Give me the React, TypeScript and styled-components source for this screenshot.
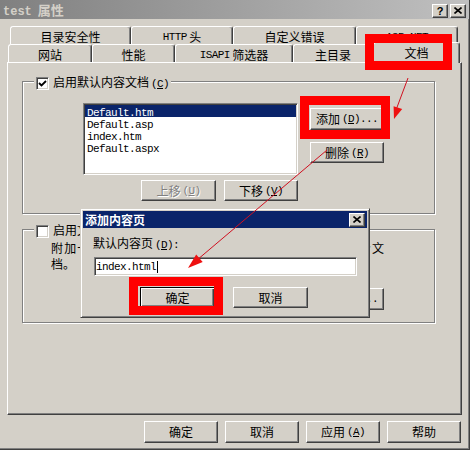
import React from 'react'
import styled, { createGlobalStyle, css } from 'styled-components'

const GlobalStyle = createGlobalStyle`
  html, body {
    margin: 0;
    padding: 0;
    background: #d4d0c8;
  }
  body {
    font-family: "Noto Sans CJK SC", "Liberation Sans", sans-serif;
    font-size: 12px;
    color: #000;
  }
  * {
    box-sizing: border-box;
  }
`

const raised = css`
  border: 1px solid;
  border-color: #fff #404040 #404040 #fff;
  box-shadow: inset -1px -1px #808080;
`

const sunken = css`
  border: 1px solid;
  border-color: #808080 #fff #fff #808080;
  box-shadow: inset 1px 1px #404040, inset -1px -1px #d4d0c8;
`

const Window = styled.div`
  position: relative;
  width: 470px;
  height: 450px;
  display: flex;
  flex-direction: column;
  background: #d4d0c8;
  border-right: 1px solid #404040;
  border-bottom: 1px solid #404040;
  box-shadow: inset -1px -1px #808080;
  overflow: hidden;
`

const TitleBar = styled.div<{ $active?: boolean }>`
  height: ${p => (p.$active ? 17 : 19)}px;
  flex: none;
  display: flex;
  align-items: center;
  padding: ${p => (p.$active ? '0 2px 0 2px' : '2px 3px 0 3px')};
  background: ${p =>
    p.$active ? '#0a246a' : 'linear-gradient(to right, #808080, #c0c0c0)'};
  color: ${p => (p.$active ? '#fff' : '#d4d0c8')};
  font-weight: 700;
  font-size: ${p => (p.$active ? 12 : 13)}px;
`

const TitleText = styled.div`
  flex: 1;
  line-height: 14px;
  white-space: nowrap;
`

const TitleWord = styled.span`
  font-family: "Liberation Mono", "DejaVu Sans Mono", monospace;
  font-size: 12px;
  font-weight: 700;
  margin-right: 6px;
`

const CaptionButton = styled.span`
  width: 16px;
  height: 14px;
  margin-left: 2px;
  background: #d4d0c8;
  ${raised};
  display: flex;
  align-items: center;
  justify-content: center;
  color: #000;
  font: 700 11px "Liberation Sans", sans-serif;
`

const Ascii = styled.span<{ $bold?: boolean }>`
  font-family: "Liberation Mono", "DejaVu Sans Mono", monospace;
  font-size: 11px;
  letter-spacing: -0.6px;
  font-weight: ${p => (p.$bold ? 700 : 400)};
`

const MnKey = styled(Ascii)`
  margin-left: 2px;
  u {
    text-underline-offset: 1px;
  }
`

const Body = styled.div`
  display: flex;
  flex-direction: column;
  padding-top: 7px;
`

const TabRow = styled.div<{ $indent: number }>`
  display: flex;
  align-items: flex-end;
  height: 18px;
  padding-left: ${p => p.$indent}px;
`

const Tab = styled.div<{ $w: number; $selected?: boolean }>`
  width: ${p => p.$w}px;
  height: ${p => (p.$selected ? 21 : 18)}px;
  margin-bottom: ${p => (p.$selected ? -1 : 0)}px;
  position: relative;
  z-index: ${p => (p.$selected ? 2 : 1)};
  background: #d4d0c8;
  border: 1px solid;
  border-bottom: none;
  border-color: #fff #404040 transparent #fff;
  border-radius: 3px 3px 0 0;
  box-shadow: inset -1px 0 #808080;
  display: flex;
  align-items: center;
  justify-content: center;
  padding-top: ${p => (p.$selected ? 0 : 2)}px;
  line-height: 14px;
  white-space: nowrap;
`

const Panel = styled.div`
  margin-left: 7px;
  width: 455px;
  height: 353px;
  ${raised};
  padding: 18px 0 0 14px;
  display: flex;
  flex-direction: column;
`

const GroupBox = styled.div<{ $h: number; $gap?: number }>`
  width: 413px;
  height: ${p => p.$h}px;
  margin-top: ${p => p.$gap ?? 0}px;
  flex: none;
  border: 1px solid #808080;
  box-shadow: inset 1px 1px #fff, 1px 1px #fff;
  display: flex;
  flex-direction: column;
  align-items: flex-start;
`

const GroupHeader = styled.div`
  display: flex;
  align-items: center;
  gap: 4px;
  height: 14px;
  margin: -6px 0 0 11px;
  padding: 0 2px;
  background: #d4d0c8;
  line-height: 14px;
  white-space: nowrap;
`

const CheckBox = styled.span`
  width: 13px;
  height: 13px;
  flex: none;
  background: #fff;
  ${sunken};
  display: flex;
  align-items: center;
  justify-content: center;
`

const DocArea = styled.div`
  display: grid;
  grid-template-columns: 215px 74px;
  column-gap: 12px;
  row-gap: 5px;
  margin: 13px 0 0 60px;
`

const ListBox = styled.div`
  height: 72px;
  background: #fff;
  ${sunken};
  padding: 1px;
`

const ListItem = styled.div<{ $selected?: boolean }>`
  height: 12px;
  line-height: 12px;
  padding-left: 2px;
  background: ${p => (p.$selected ? '#0a246a' : 'transparent')};
  color: ${p => (p.$selected ? '#fff' : '#000')};
  white-space: nowrap;
`

const ButtonColumn = styled.div`
  display: flex;
  flex-direction: column;
`

const MoveRow = styled.div`
  display: flex;
  justify-content: flex-end;
  gap: 8px;
`

const Button = styled.button<{
  $w: number
  $h?: number
  $mt?: number
  $default?: boolean
}>`
  width: ${p => p.$w}px;
  height: ${p => p.$h ?? 22}px;
  margin: ${p => p.$mt ?? 0}px 0 0 0;
  padding: 0;
  flex: none;
  background: #d4d0c8;
  font: 12px "Noto Sans CJK SC", "Liberation Sans", sans-serif;
  line-height: 14px;
  color: #000;
  border: 1px solid;
  border-color: ${p => (p.$default ? '#000' : '#fff #404040 #404040 #fff')};
  box-shadow: ${p =>
    p.$default
      ? 'inset 1px 1px #fff, inset -1px -1px #404040, inset -2px -2px #808080'
      : 'inset -1px -1px #808080'};
  display: flex;
  align-items: center;
  justify-content: center;
  white-space: nowrap;

  &:disabled {
    color: #808080;
    text-shadow: 1px 1px #fff;
  }
`

const DescBlock = styled.div`
  width: 333px;
  margin: 3px 0 0 28px;
  display: flex;
  flex-direction: column;
`

const DescLine = styled.div`
  line-height: 13px;
  text-align: justify;
  text-align-last: justify;
  white-space: nowrap;
`

const DescTail = styled.div`
  line-height: 13px;
`

const BrowseButton = styled(Button)`
  align-self: flex-end;
`

const Footer = styled.div`
  display: flex;
  justify-content: flex-end;
  gap: 7px;
  margin-top: 6px;
  padding-right: 8px;
`

const Popup = styled.div`
  position: absolute;
  left: 80px;
  top: 208px;
  width: 290px;
  height: 110px;
  z-index: 5;
  background: #d4d0c8;
  border: 1px solid;
  border-color: #d4d0c8 #404040 #404040 #d4d0c8;
  box-shadow: inset 1px 1px #fff, inset -1px -1px #808080;
  padding: 2px;
  display: flex;
  flex-direction: column;
`

const PopupLabel = styled.div`
  margin: 8px 0 0 10px;
  line-height: 14px;
`

const TextInput = styled.div`
  width: 263px;
  height: 19px;
  margin: 5px 0 0 11px;
  background: #fff;
  ${sunken};
  padding-left: 1px;
  display: flex;
  align-items: center;
`

const Caret = styled.span`
  width: 1px;
  height: 12px;
  margin-left: 1px;
  background: #000;
`

const PopupButtons = styled.div`
  display: flex;
  gap: 18px;
  margin: 11px 0 0 57px;
`

const Overlay = styled.svg`
  position: absolute;
  left: 0;
  top: 0;
  z-index: 10;
  pointer-events: none;
`

const Mn = ({ k, tail = '' }: { k: string; tail?: string }) => (
  <MnKey>
    (<u>{k}</u>){tail}
  </MnKey>
)

const CloseGlyph = () => (
  <svg width="8" height="7" viewBox="0 0 8 7">
    <path d="M0.5 0.5 L7.5 6.5 M7.5 0.5 L0.5 6.5" stroke="#000" strokeWidth="1.6" />
  </svg>
)

const CheckGlyph = () => (
  <svg width="9" height="9" viewBox="0 0 9 9">
    <polyline points="1,4 3.5,6.5 8,2" fill="none" stroke="#000" strokeWidth="1.8" />
  </svg>
)

const docs = ['Default.htm', 'Default.asp', 'index.htm', 'Default.aspx']

const App = () => {
  return (
    <Window>
      <GlobalStyle />
      <TitleBar>
        <TitleText>
          <TitleWord>test</TitleWord>属性
        </TitleText>
        <CaptionButton>?</CaptionButton>
        <CaptionButton>
          <CloseGlyph />
        </CaptionButton>
      </TitleBar>

      <Body>
        <TabRow $indent={10}>
          <Tab $w={121}>目录安全性</Tab>
          <Tab $w={102}>
            <Ascii>HTTP</Ascii>&nbsp;头
          </Tab>
          <Tab $w={123}>自定义错误</Tab>
          <Tab $w={102}>
            <Ascii>ASP.NET</Ascii>
          </Tab>
        </TabRow>
        <TabRow $indent={8}>
          <Tab $w={84}>网站</Tab>
          <Tab $w={83}>性能</Tab>
          <Tab $w={118}>
            <Ascii>ISAPI</Ascii>&nbsp;筛选器
          </Tab>
          <Tab $w={80}>主目录</Tab>
          <Tab $w={87} $selected>
            文档
          </Tab>
        </TabRow>

        <Panel>
          <GroupBox $h={133}>
            <GroupHeader>
              <CheckBox>
                <CheckGlyph />
              </CheckBox>
              <span>
                启用默认内容文档<Mn k="C" />
              </span>
            </GroupHeader>
            <DocArea>
              <ListBox>
                {docs.map((d, i) => (
                  <ListItem key={d} $selected={i === 0}>
                    <Ascii>{d}</Ascii>
                  </ListItem>
                ))}
              </ListBox>
              <ButtonColumn>
                <Button $w={74} $mt={5}>
                  添加<Mn k="D" tail="..." />
                </Button>
                <Button $w={74} $h={21} $mt={12}>
                  删除<Mn k="R" />
                </Button>
              </ButtonColumn>
              <MoveRow>
                <Button $w={75} $h={21} disabled>
                  上移<Mn k="U" />
                </Button>
                <Button $w={74} $h={21}>
                  下移<Mn k="V" />
                </Button>
              </MoveRow>
            </DocArea>
          </GroupBox>

          <GroupBox $h={94} $gap={15}>
            <GroupHeader>
              <CheckBox />
              <span>
                启用文档页脚<Mn k="O" />
              </span>
            </GroupHeader>
            <DescBlock>
              <DescLine>
                附加一个 <Ascii>HTML</Ascii> 格式的页脚到您的 <Ascii>Web</Ascii> 服务器返回的每个文
              </DescLine>
              <DescTail>档。</DescTail>
              <BrowseButton $w={74} $mt={18}>
                浏览<Mn k="B" tail="..." />
              </BrowseButton>
            </DescBlock>
          </GroupBox>
        </Panel>

        <Footer>
          <Button $w={74}>确定</Button>
          <Button $w={74}>取消</Button>
          <Button $w={74}>
            应用<Mn k="A" />
          </Button>
          <Button $w={74}>帮助</Button>
        </Footer>
      </Body>

      <Popup>
        <TitleBar $active>
          <TitleText>添加内容页</TitleText>
          <CaptionButton>
            <CloseGlyph />
          </CaptionButton>
        </TitleBar>
        <PopupLabel>
          默认内容页<Mn k="D" tail=":" />
        </PopupLabel>
        <TextInput>
          <Ascii>index.html</Ascii>
          <Caret />
        </TextInput>
        <PopupButtons>
          <Button $w={75} $h={21} $default>
            确定
          </Button>
          <Button $w={75} $h={21}>
            取消
          </Button>
        </PopupButtons>
      </Popup>

      <Overlay width="470" height="450" viewBox="0 0 470 450">
        <g fill="none" stroke="#ff0000" strokeWidth="9">
          <rect x="369.5" y="38.5" width="78" height="27" />
          <rect x="304.5" y="100.5" width="81" height="34" />
          <rect x="133.5" y="281.5" width="85" height="29" />
        </g>
        <g stroke="#d01020" strokeWidth="1">
          <line x1="408" y1="78" x2="396" y2="110" />
          <line x1="327" y1="150" x2="197" y2="260" />
        </g>
        <g fill="#ee1111">
          <polygon points="394,119 402.2,109.1 393.6,106.2" />
          <polygon points="188,268 202.7,262.1 196.2,254.5" />
        </g>
      </Overlay>
    </Window>
  )
}

export default App
